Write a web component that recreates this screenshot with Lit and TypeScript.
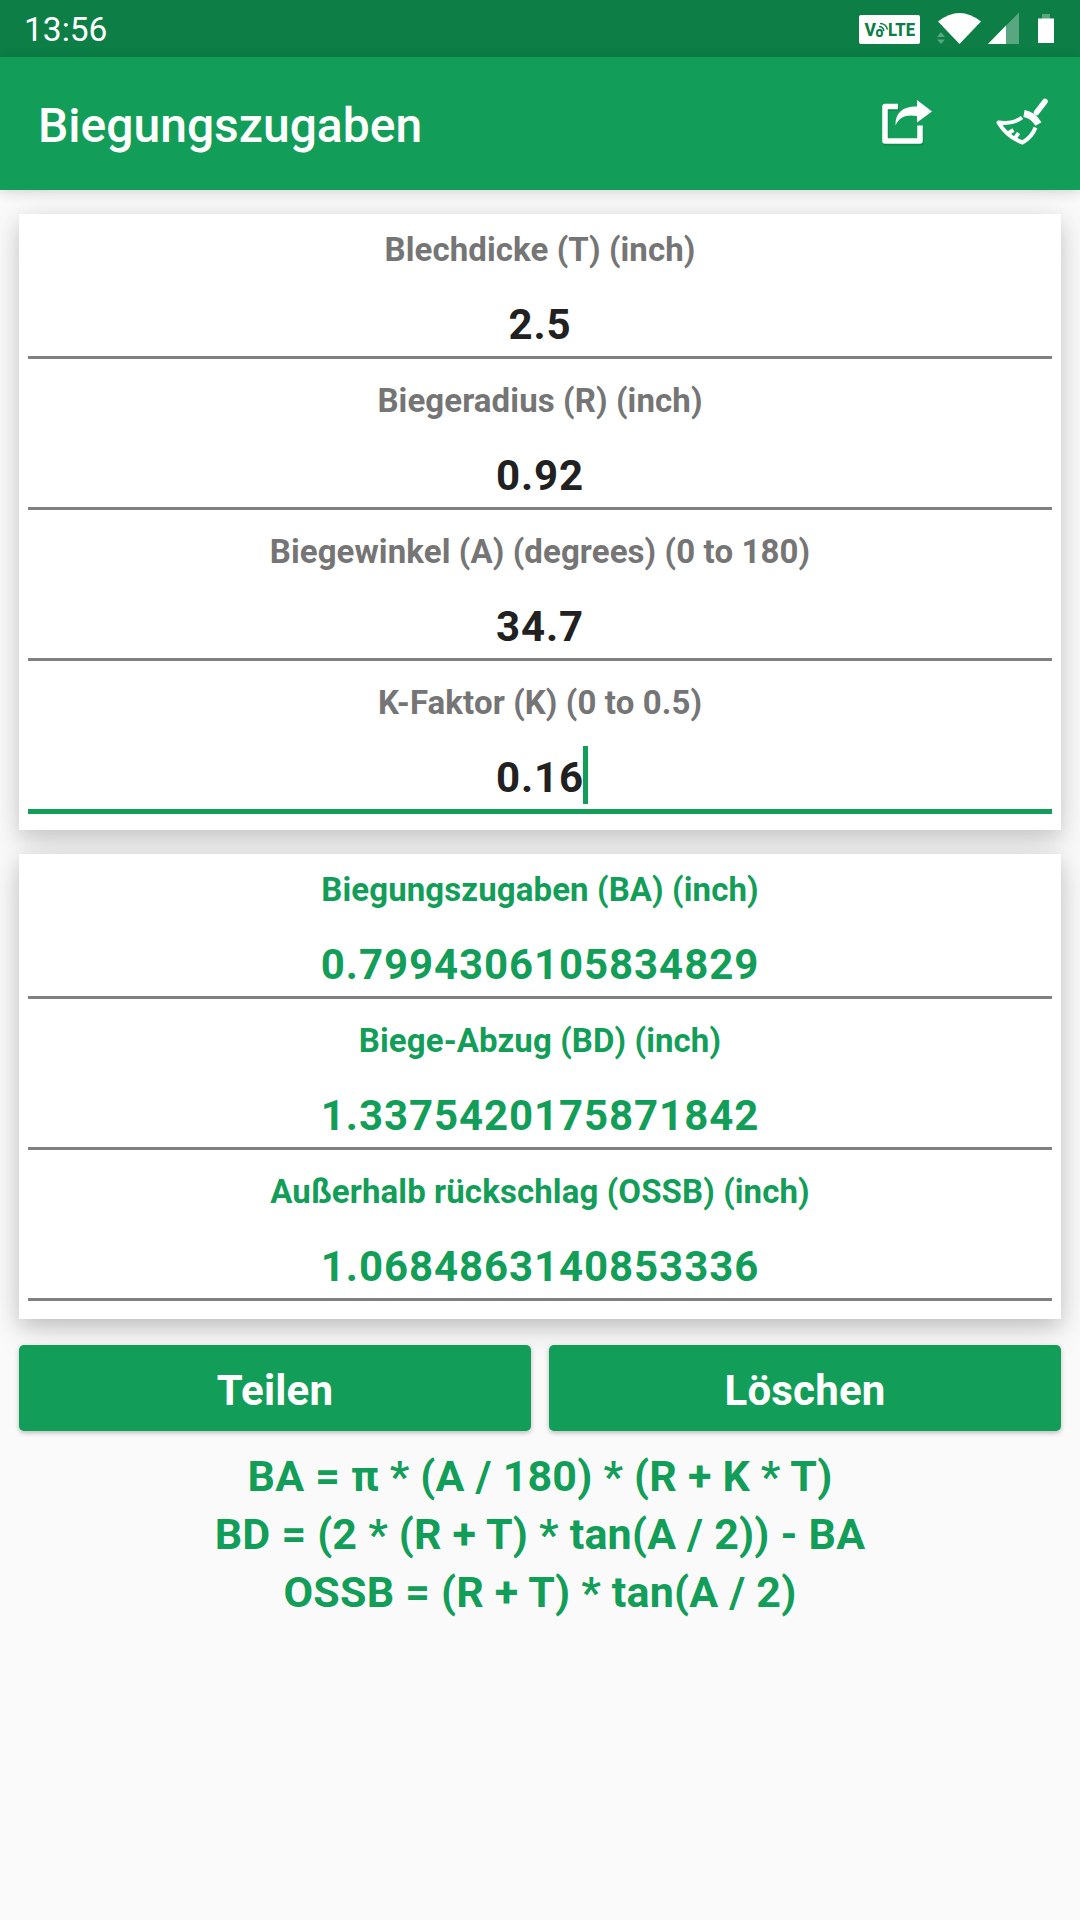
import { LitElement, html, svg, css } from "lit";
import { customElement, property } from "lit/decorators.js";
import { classMap } from "lit/directives/class-map.js";

@customElement("value-row")
class ValueRow extends LitElement {
  @property() label = "";
  @property() value = "";
  @property({ type: Boolean, reflect: true }) result = false;
  @property({ type: Boolean, reflect: true }) focused = false;

  static styles = css`
    :host { display: flex; flex-direction: column; color: #212121; }
    .label { height: 39px; line-height: 39px; font-size: 33px; font-weight: 700; letter-spacing: 0.1px; color: #757575; text-align: center; white-space: pre; }
    .value { height: 50px; line-height: 50px; margin-top: 31px; font-size: 42px; font-weight: 700; letter-spacing: 0.92px; text-align: center; position: relative; align-self: center; }
    .line { height: 3px; margin-top: 6px; background: #808080; }
    .line.active { height: 5px; background: #129e58; }
    .caret { position: absolute; left: calc(100% - 1px); top: -7px; width: 5px; height: 58px; background: #129e58; }
    :host([result]) .label, :host([result]) .value { color: #129e58; }
  `;

  render() {
    return html`
      <div class="label">${this.label}</div>
      <div class="value">${this.value}${this.focused ? html`<span class="caret"></span>` : ""}</div>
      <div class=${classMap({ line: true, active: this.focused })}></div>
    `;
  }
}

const inputs = [
  { label: "Blechdicke (T) (inch)", value: "2.5" },
  { label: "Biegeradius (R) (inch)", value: "0.92" },
  { label: "Biegewinkel (A) (degrees) (0 to 180)", value: "34.7" },
  { label: "K-Faktor (K) (0 to 0.5)", value: "0.16", focused: true },
];

const results = [
  { label: "Biegungszugaben (BA) (inch)", value: "0.7994306105834829" },
  { label: "Biege-Abzug (BD) (inch)", value: "1.3375420175871842" },
  { label: "Außerhalb rückschlag (OSSB) (inch)", value: "1.0684863140853336" },
];

const formulas = [
  "BA = π * (A / 180) * (R + K * T)",
  "BD = (2 * (R + T) * tan(A / 2)) - BA",
  "OSSB = (R + T) * tan(A / 2)",
];

const volte = svg`
  <rect x="0" y="0" width="61" height="29" rx="2" fill="#fff"/>
  <text x="5.500" y="21" font-size="17.500" font-weight="800">V</text>
  <text x="16.500" y="21.500" font-size="14" font-weight="800">o</text>
  <text x="29" y="21" font-size="17.500" font-weight="800" textLength="27" lengthAdjust="spacingAndGlyphs">LTE</text>
  <path d="M20 11.500q4 0 5 4.500M21 8.500q6 0 7.500 6" fill="none" stroke="#0c7e46" stroke-width="1.500"/>`;

@customElement("app-root")
class AppRoot extends LitElement {
  static styles = css`
    :host { display: flex; flex-direction: column; height: 1920px; background: #fafafa; font-family: Roboto, "Liberation Sans", sans-serif; overflow: hidden; }
    .status { display: flex; height: 57px; background: #0c7e46; color: #fff; align-items: center; justify-content: space-between; padding: 0 24px 0 24px; flex: none; box-sizing: border-box; }
    .time { font-size: 33.500px; line-height: 39px; padding-top: 2px; }
    .tray { display: block; width: 240px; height: 57px; margin-right: -24px; }
    .bar { display: flex; height: 133px; flex: none; background: #129e58; color: #fff; align-items: center; padding-left: 38px; box-shadow: 0 2px 12px rgba(0,0,0,.16); box-sizing: border-box; }
    .title { flex: 1; font-size: 48px; line-height: 58px; font-weight: 500; padding-top: 5px; }
    .icon { display: block; width: 116px; height: 133px; }
    main { display: flex; flex-direction: column; padding: 24px 19px 0; }
    .card { display: flex; flex-direction: column; gap: 22px; background: #fff; padding: 16px 9px; box-shadow: 0 8px 18px rgba(0,0,0,.12), 0 8px 36px rgba(0,0,0,.12); }
    .card + .card { margin-top: 24px; padding-bottom: 18px; box-shadow: 0 8px 18px rgba(0,0,0,.14), 0 8px 36px rgba(0,0,0,.13); }
    .actions { display: flex; gap: 18px; margin-top: 26px; position: relative; }
    button { flex: 1; height: 86px; border: 0; border-radius: 5px; background: #129e58; color: #fff; font: 700 42px/86px Roboto, "Liberation Sans", sans-serif; letter-spacing: 0.2px; padding: 3px 0 0; box-shadow: 0 2px 5px rgba(0,0,0,.25); }
    .formulas { margin-top: 16px; color: #129e58; font-size: 43px; font-weight: 700; letter-spacing: 0.2px; line-height: 58px; text-align: center; }
  `;

  render() {
    return html`
      <div class="status">
        <span class="time">13:56</span>
        <svg class="tray" viewBox="840 0 240 57">
          <g transform="translate(859 15)" fill="#0c7e46">${volte}</g>
          <path d="M938 21.500Q959.500 4.500 981 21.500L959.500 44Z" fill="#fff"/>
          <path d="M937 37l4-5 4 5zM937 39.500l4 4.500 4-4.500z" fill="#59a780"/>
          <path d="M988 44L1019 12.500V44z" fill="#59a780"/>
          <path d="M988 44L1006 25.500V44z" fill="#fff"/>
          <path d="M1042 14h8v5h-8z" fill="#59a780"/>
          <path d="M1038 18.500h16V43h-16z" fill="#fff"/>
        </svg>
      </div>
      <header class="bar">
        <span class="title">Biegungszugaben</span>
        <svg class="icon" viewBox="848 57 116 133">
          <path d="M898 107H885V141.500H920V126" transform="translate(1 1.500)" fill="none" stroke="#0b6f3e" stroke-opacity=".45" stroke-width="5"/>
          <path d="M898 106.500H885V141H920V125.500" fill="none" stroke="#fff" stroke-width="5.500" stroke-linejoin="round"/>
          <path d="M895.500 125.500C895 112 904 106 917 106.500V100L932 111.500 917 122.500V116C906 114 899 117 895.500 125.500Z" fill="#fff"/>
        </svg>
        <svg class="icon" viewBox="964 57 116 133">
          <g fill="none" stroke="#fff">
            <path d="M1045 101.500L1036.500 112.500" stroke-width="5.500" stroke-linecap="round"/>
            <path d="M1024 113.500Q1033 115 1038.500 124" stroke-width="7"/>
            <path d="M1022 117.500Q1013 124.500 998.500 122.500Q1007 137 1022.500 142.500Q1032 137 1035.500 127.500M1007 134l6.500-4M1014.500 139l4-6" stroke-width="4" stroke-linejoin="round"/>
          </g>
        </svg>
      </header>
      <main>
        <section class="card">
          ${inputs.map((r) => html`<value-row .label=${r.label} .value=${r.value} ?focused=${r.focused ?? false}></value-row>`)}
        </section>
        <section class="card">
          ${results.map((r) => html`<value-row .label=${r.label} .value=${r.value} result></value-row>`)}
        </section>
        <div class="actions">
          <button>Teilen</button>
          <button>Löschen</button>
        </div>
        <div class="formulas">${formulas.map((f) => html`<div>${f}</div>`)}</div>
      </main>
    `;
  }
}
